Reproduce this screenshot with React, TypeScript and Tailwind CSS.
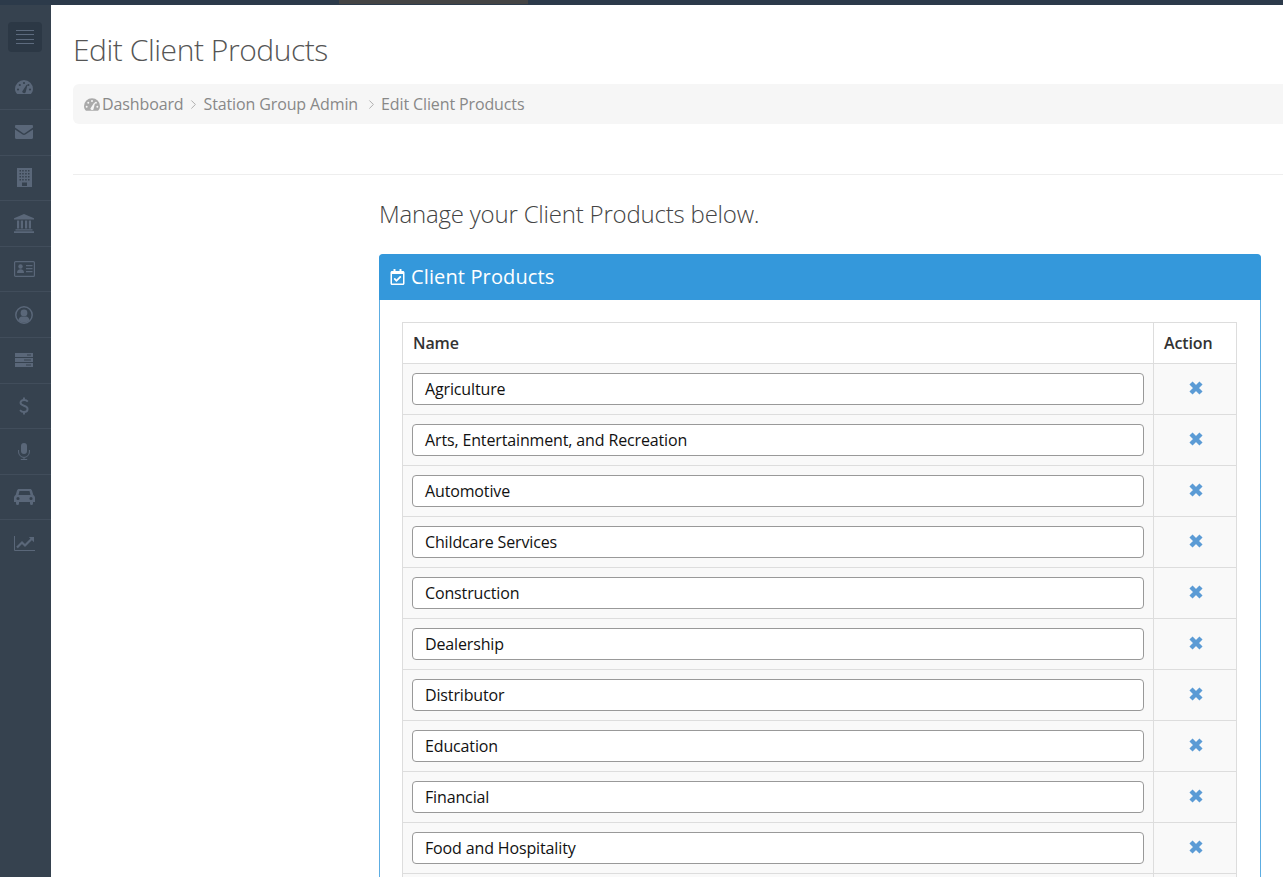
import type { ReactNode } from 'react'
import { FaRegCalendarCheck } from 'react-icons/fa'
import { ChevronRight } from 'lucide-react'

function circleCut(x: number, y: number, r: number) {
  return `M${x - r} ${y}a${r} ${r} 0 1 0 ${2 * r} 0a${r} ${r} 0 1 0 ${-2 * r} 0Z`
}

function Gauge({ className }: { className: string }) {
  const dome = 'M2.2 14C.8 12.6 0 10.9 0 9a9 9 0 0 1 18 0c0 1.9-.8 3.6-2.2 5Z'
  const ticks = [circleCut(3, 9.5, 1.1), circleCut(4.8, 5, 1.1), circleCut(9, 3, 1.1), circleCut(15, 9.5, 1.1), circleCut(13.4, 5, 1.1)].join('')
  return (
    <svg viewBox="0 0 18 14" className={className} fill="currentColor">
      <path fillRule="evenodd" d={dome + ticks + 'M7.2 11.4L11.6 4.8L12.4 5.2L10.6 12.6A2 2 0 0 1 7.2 11.4Z'} />
    </svg>
  )
}

const navIcons: { box: string; icon: ReactNode }[] = [
  { box: 'mr-[3px]', icon: <Gauge className="h-[14px] w-[18px]" /> },
  {
    box: 'mr-[3px]',
    icon: (
      <svg viewBox="0 0 18 14" className="h-[14px] w-[18px]" fill="currentColor">
        <path d="M0 1.2C0 .5.5 0 1.2 0h15.6c.7 0 1.2.5 1.2 1.2v1.3L9.8 8.2c-.5.3-1.1.3-1.6 0L0 2.5Z" />
        <path d="M0 4.4 7.6 9.6c.9.6 1.9.6 2.8 0L18 4.4v8.4c0 .7-.5 1.2-1.2 1.2H1.2C.5 14 0 13.5 0 12.8Z" />
      </svg>
    ),
  },
  {
    box: 'mr-[3px]',
    icon: (
      <svg viewBox="0 0 15 19" className="h-[19px] w-[15px]" fill="currentColor" fillRule="evenodd">
        <path d="M0 0h15v19H0ZM2.5 2v1.5H4V2ZM5.2 2v1.5h1.5V2ZM8.2 2v1.5h1.5V2ZM11 2v1.5h1.5V2ZM2.5 5v1.5H4V5ZM5.2 5v1.5h1.5V5ZM8.2 5v1.5h1.5V5ZM11 5v1.5h1.5V5ZM2.5 8v1.5H4V8ZM5.2 8v1.5h1.5V8ZM8.2 8v1.5h1.5V8ZM11 8v1.5h1.5V8ZM2.5 11v1.5H4V11ZM5.2 11v1.5h1.5V11ZM8.2 11v1.5h1.5V11ZM11 11v1.5h1.5V11ZM5 14.5V18h5v-3.5Z" />
      </svg>
    ),
  },
  {
    box: 'mr-[3px]',
    icon: (
      <svg viewBox="0 0 20 19" className="h-[19px] w-[20px]" fill="currentColor">
        <path d="M10 0 20 4.2V5.4H0V4.2Z" />
        <path d="M3 6.5h2.2v8H3ZM6.8 6.5H9v8H6.8ZM11 6.5h2.2v8H11ZM14.8 6.5H17v8h-2.2Z" />
        <path d="M1.5 15.2h17v1.4h-17ZM0 17.2h20V19H0Z" />
      </svg>
    ),
  },
  {
    box: 'mr-[3px]',
    icon: (
      <svg viewBox="0 0 21 16" className="h-[16px] w-[21px]" fill="currentColor">
        <rect x=".6" y=".6" width="19.8" height="14.8" rx="1" fill="none" stroke="currentColor" strokeWidth="1.2" />
        <circle cx="6.5" cy="5.5" r="2.2" />
        <path d="M3 12c0-2.6 1.2-3.8 3.5-3.8S10 9.4 10 12Z" />
        <path d="M12 4h6.5v1.3H12ZM12 7h6.5v1.3H12ZM12 10h6.5v1.3H12Z" />
      </svg>
    ),
  },
  {
    box: 'mr-[3px]',
    icon: (
      <svg viewBox="0 0 18 18" className="h-[18px] w-[18px]" fill="currentColor">
        <circle cx="9" cy="9" r="8.2" fill="none" stroke="currentColor" strokeWidth="1.5" />
        <circle cx="9" cy="7" r="3.4" />
        <path d="M3.4 14.2C3.8 11.8 5.4 10.6 7 10.4c1.2.5 2.8.5 4 0 1.6.2 3.2 1.4 3.6 3.8C13.2 15.6 11.2 16.5 9 16.5s-4.2-.9-5.6-2.3Z" />
      </svg>
    ),
  },
  {
    box: 'mr-[3px]',
    icon: (
      <svg viewBox="0 0 18 14" className="h-[14px] w-[18px]" fill="currentColor" fillRule="evenodd">
        <path d="M0 0h18v4H0ZM12 1.5v1h4v-1Z" />
        <path d="M0 5h18v4H0ZM9 6.5v1h7v-1Z" />
        <path d="M0 10h18v4H0ZM11 11.5v1h5v-1Z" />
      </svg>
    ),
  },
  {
    box: 'mr-[3px]',
    icon: (
      <svg viewBox="0 0 10 18" className="h-[18px] w-[10px]" fill="none" stroke="currentColor" strokeWidth="1.9">
        <path d="M8.8 4.6C7.8 3.3 6.6 3 5 3 3 3 1.5 4 1.5 5.8 1.5 9.5 8.6 8 8.6 12c0 2-1.6 3-3.6 3-1.5 0-2.9-.6-4-1.9" />
        <path d="M5 .4V3M5 15v2.6" />
      </svg>
    ),
  },
  {
    box: 'mr-[3px]',
    icon: (
      <svg viewBox="0 0 12 17" className="h-[17px] w-[12px]" fill="currentColor">
        <rect x="3" y="0" width="6" height="11" rx="3" />
        <path d="M.6 7v2a5.4 5.4 0 0 0 10.8 0V7M6 14.4v2M2.8 16.5h6.4" fill="none" stroke="currentColor" strokeWidth="1" />
      </svg>
    ),
  },
  {
    box: 'mr-[3px]',
    icon: (
      <svg viewBox="0 0 21 16" className="h-[16px] w-[21px]" fill="currentColor">
        <path
          fillRule="evenodd"
          d={
            'M5 0h11c1 0 1.7.6 2 1.5L19.3 6C20.4 6.6 21 7.5 21 8.8V13h-2v1.5a1.5 1.5 0 0 1-3 0V13H5v1.5a1.5 1.5 0 0 1-3 0V13H0V8.8C0 7.5.6 6.6 1.7 6L3 1.5C3.3.6 4 0 5 0ZM5.5 2 4.5 6h12l-1-4Z' +
            circleCut(4, 9.5, 1.6) +
            circleCut(17, 9.5, 1.6)
          }
        />
      </svg>
    ),
  },
  {
    box: 'mr-[3px]',
    icon: (
      <svg viewBox="0 0 21 15" className="h-[15px] w-[21px]" fill="none" stroke="currentColor">
        <path d="M.5 0v14.5H21" strokeWidth="1" />
        <path d="M3 11.5 8 6.5l3 3 6.5-6.5" strokeWidth="2.2" />
        <path d="M14.8 1H20v5.2Z" fill="currentColor" stroke="none" />
      </svg>
    ),
  },
]

const products = [
  'Agriculture',
  'Arts, Entertainment, and Recreation',
  'Automotive',
  'Childcare Services',
  'Construction',
  'Dealership',
  'Distributor',
  'Education',
  'Financial',
  'Food and Hospitality',
]

function Sidebar() {
  return (
    <aside className="w-[51px] shrink-0 bg-[#36424f]">
      <div className="h-[59.4px] pl-[8px] pt-[17px]">
        <button className="flex h-[30px] w-[34px] flex-col items-center justify-center gap-[3.6px] rounded-[4px] bg-[#2c3845]">
          <span className="h-px w-[18px] bg-[#5d6b7e]" />
          <span className="h-px w-[18px] bg-[#5d6b7e]" />
          <span className="h-px w-[18px] bg-[#5d6b7e]" />
          <span className="h-px w-[18px] bg-[#5d6b7e]" />
        </button>
      </div>
      {navIcons.map((item, i) => (
        <div
          key={i}
          className={`flex h-[45.6px] items-center justify-center text-[#5a6779] ${i < 10 ? 'border-b border-[#414d5b]' : ''}`}
        >
          <div className={`flex ${item.box}`}>{item.icon}</div>
        </div>
      ))}
    </aside>
  )
}

function ProductRow({ name }: { name: string }) {
  return (
    <div className="flex h-[51px] border-b border-[#dddddd] bg-[#f9f9f9]">
      <div className="flex w-[751px] items-start border-r border-[#dddddd] pl-[9px] pt-[9px]">
        <div className="flex h-[32px] w-[732px] items-center rounded-[4px] border border-[#999999] bg-white pl-[12px] text-[16px] tracking-[-0.14px] text-[#111111]">
          {name}
        </div>
      </div>
      <div className="flex flex-1 items-start justify-center pl-px pt-[17px] text-[#5b9bd5]">
        <svg viewBox="0 0 14 14" className="h-[14px] w-[14px]" fill="none" stroke="currentColor" strokeWidth="4.4">
          <path d="M2 2l10 10M12 2 2 12" />
        </svg>
      </div>
    </div>
  )
}

export default function App() {
  return (
    <div className="h-[877px] w-[1283px] overflow-hidden bg-white font-['Open_Sans',sans-serif]">
      <div className="flex h-[5px] bg-[#2c3a4a]">
        <div className="ml-[339px] h-[4px] w-[189px] bg-[#444444]" />
      </div>
      <div className="flex h-[872px]">
        <Sidebar />
        <main className="min-w-0 flex-1 overflow-hidden pl-[22px]">
          <h1 className="pt-[24px] text-[30px] font-light leading-[42px] tracking-[-0.45px] text-[#555555]">Edit Client Products</h1>
          <nav className="mt-[13px] flex h-[40px] items-center rounded-l-[6px] bg-[#f6f6f6] pl-[11px] text-[16px] tracking-[-0.12px] text-[#888888]">
            <Gauge className="mr-[2px] h-[13px] w-[16px] text-[#aaaaaa]" />
            <span>Dashboard</span>
            <ChevronRight strokeWidth={1.5} className="ml-[2px] mr-[3px] h-[15px] w-[15px] text-[#aaaaaa]" />
            <span>Station Group Admin</span>
            <ChevronRight strokeWidth={1.5} className="ml-[6px] mr-[2px] h-[15px] w-[15px] text-[#aaaaaa]" />
            <span>Edit Client Products</span>
          </nav>
          <hr className="mt-[50px] border-t border-[#eeeeee]" />
          <div className="ml-[306px] w-[882px]">
            <p className="mt-[22px] text-[24px] font-light leading-[34px] tracking-[-0.2px] text-[#444444]">Manage your Client Products below.</p>
            <section className="mt-[23px] rounded-t-[4px] border border-[#5dade2]">
              <header className="-mx-px -mt-px flex h-[46px] items-center rounded-t-[4px] bg-[#3498db] pl-[11px] text-[20px] font-medium tracking-[0.13px] text-white">
                <FaRegCalendarCheck className="mr-[6px] h-[16px] w-[15px]" />
                <span>Client Products</span>
              </header>
              <div className="px-[22px] pt-[22px]">
                <div className="w-[835px] border border-b-0 border-[#dddddd]">
                  <div className="flex h-[41px] border-b border-[#dddddd] text-[16px] font-semibold tracking-[-0.12px] text-[#333333]">
                    <div className="flex w-[751px] items-center border-r border-[#dddddd] pl-[10px]">Name</div>
                    <div className="flex flex-1 items-center pl-[10px]">Action</div>
                  </div>
                  {products.map((p) => (
                    <ProductRow key={p} name={p} />
                  ))}
                  <div className="flex h-[51px] bg-[#f9f9f9]">
                    <div className="w-[751px] border-r border-[#dddddd]" />
                  </div>
                </div>
              </div>
            </section>
          </div>
        </main>
      </div>
    </div>
  )
}
